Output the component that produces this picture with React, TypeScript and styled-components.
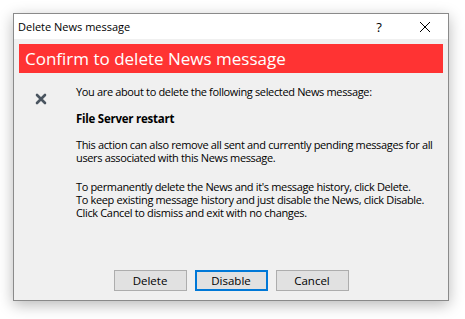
import React from "react";
import styled, { createGlobalStyle } from "styled-components";

const GlobalStyle = createGlobalStyle`
  html, body {
    margin: 0;
    padding: 0;
    background: #ffffff;
    font-family: "Open Sans", "Noto Sans", sans-serif;
  }
`;

const Page = styled.div`
  width: 465px;
  height: 319px;
  padding: 13px 0 0 13px;
  box-sizing: border-box;
`;

const Window = styled.div`
  width: 436px;
  height: 288px;
  box-sizing: border-box;
  border: 1px solid #8a8a8a;
  background: #f0f0f0;
  box-shadow: 0 4px 14px rgba(0, 0, 0, 0.28);
  display: flex;
  flex-direction: column;
`;

const TitleBar = styled.div`
  height: 25px;
  background: #ffffff;
  display: flex;
  align-items: center;
  padding-left: 4px;
  font-size: 11px;
  color: #000;
`;

const TitleText = styled.span`
  flex: 1;
`;

const TitleButton = styled.span`
  width: 46px;
  display: flex;
  justify-content: center;
  align-items: center;
  font-size: 13px;
`;

const Banner = styled.div`
  margin: 5px 5px 0 5px;
  height: 29px;
  background: #ff3333;
  color: #ffffff;
  font-size: 17px;
  display: flex;
  align-items: center;
  padding-left: 6px;
`;

const Content = styled.div`
  flex: 1;
  display: flex;
  padding: 12px 0 0 21px;
`;

const IconCell = styled.div`
  flex: none;
  width: 41px;
  padding-top: 3px;
`;

const Messages = styled.div`
  font-size: 11px;
  line-height: 13px;
  color: #000;
  white-space: nowrap;
`;

const Line = styled.p<{ $bold?: boolean; $gap?: number }>`
  margin: 0 0 ${p => p.$gap ?? 13}px 0;
  font-weight: ${p => (p.$bold ? 700 : 400)};
  font-size: ${p => (p.$bold ? "11.5px" : "11px")};
  letter-spacing: ${p => (p.$bold ? "-0.25px" : "-0.35px")};
`;

const Buttons = styled.div`
  display: flex;
  justify-content: center;
  gap: 8px;
  padding: 0 0 9px 0;
`;

const Button = styled.button<{ $focused?: boolean }>`
  width: 73px;
  height: 21px;
  box-sizing: border-box;
  background: #e1e1e1;
  border: ${p => (p.$focused ? "2px solid #0078d7" : "1px solid #adadad")};
  font-family: inherit;
  font-size: 11.5px;
  color: #000;
  padding: 0;
`;

function CloseIcon() {
  return (
    <svg width="12" height="12" viewBox="0 0 12 12">
      <path d="M1 1 L11 11 M11 1 L1 11" stroke="#000" strokeWidth="1" />
    </svg>
  );
}

function DeleteIcon() {
  return (
    <svg width="12" height="12" viewBox="0 0 12 12">
      <path d="M2 2 L10 10 M10 2 L2 10" stroke="#4a5560" strokeWidth="2.6" strokeLinecap="round" />
    </svg>
  );
}

export default function App() {
  return (
    <>
      <GlobalStyle />
      <Page>
        <Window>
          <TitleBar>
            <TitleText>Delete News message</TitleText>
            <TitleButton>?</TitleButton>
            <TitleButton>
              <CloseIcon />
            </TitleButton>
          </TitleBar>
          <Banner>Confirm to delete News message</Banner>
          <Content>
            <IconCell>
              <DeleteIcon />
            </IconCell>
            <Messages>
              <Line $gap={14}>You are about to delete the following selected News message:</Line>
              <Line $bold>File Server restart</Line>
              <Line $gap={16}>
                This action can also remove all sent and currently pending messages for all
                <br />
                users associated with this News message.
              </Line>
              <Line $gap={0}>
                To permanently delete the News and it's message history, click Delete.
                <br />
                To keep existing message history and just disable the News, click Disable.
                <br />
                Click Cancel to dismiss and exit with no changes.
              </Line>
            </Messages>
          </Content>
          <Buttons>
            <Button>Delete</Button>
            <Button $focused>Disable</Button>
            <Button>Cancel</Button>
          </Buttons>
        </Window>
      </Page>
    </>
  );
}
